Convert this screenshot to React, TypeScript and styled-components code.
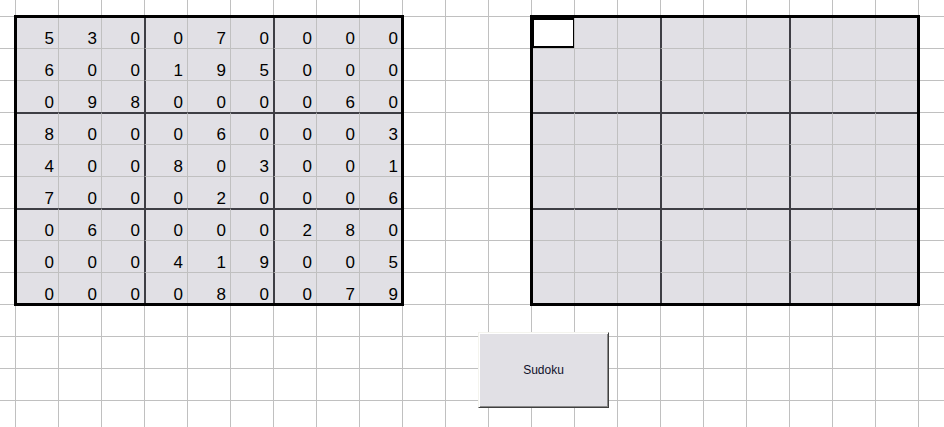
import React from "react";
import styled, { createGlobalStyle } from "styled-components";

const GlobalStyle = createGlobalStyle`
  html, body {
    margin: 0;
    padding: 0;
    background: #ffffff;
    overflow: hidden;
  }
  body {
    font-family: "Liberation Sans", Arial, sans-serif;
  }
`;

const GRID = "#c0c0c0";
const BOX = "#3e3e44";
const FILL = "#e1e0e5";

const Sheet = styled.div`
  position: relative;
  width: 944px;
  height: 427px;
  overflow: hidden;
  display: grid;
  grid-template-columns: 15px repeat(22, 43px);
  grid-template-rows: 16px repeat(13, 32px);
  background-color: #ffffff;
  background-image: linear-gradient(to right, ${GRID} 1px, transparent 1px),
    linear-gradient(to bottom, ${GRID} 1px, transparent 1px);
  background-size: 43px 32px;
  background-position: 15px 16px;
`;

const Board = styled.div<{ $col: number }>`
  position: relative;
  grid-column: ${(p) => p.$col} / span 9;
  grid-row: 2 / span 9;
  display: grid;
  grid-template-columns: repeat(9, 43px);
  grid-template-rows: repeat(9, 32px);

  &::after {
    content: "";
    position: absolute;
    top: -1px;
    left: -1px;
    right: -2px;
    bottom: -2px;
    border: 3px solid #000000;
    pointer-events: none;
  }
`;

const Cell = styled.div<{ $boxLeft: boolean; $boxTop: boolean }>`
  position: relative;
  box-sizing: border-box;
  background: ${FILL};
  border-left: ${(p) => (p.$boxLeft ? `2px solid ${BOX}` : `1px solid ${GRID}`)};
  border-top: ${(p) => (p.$boxTop ? `2px solid ${BOX}` : `1px solid ${GRID}`)};
  display: flex;
  align-items: flex-end;
  justify-content: flex-end;
  padding: 0 4px 1px 0;
  font-size: 17px;
  line-height: 17px;
  color: #000000;
`;

const ActiveCell = styled.div`
  position: absolute;
  left: 0;
  top: 1px;
  width: 43px;
  height: 30px;
  box-sizing: border-box;
  border: 2px solid #000000;
  background: #ffffff;
`;

const Button = styled.button`
  position: absolute;
  left: 478px;
  top: 332px;
  width: 131px;
  height: 76px;
  box-sizing: border-box;
  margin: 0;
  padding: 0;
  background: ${FILL};
  border-style: solid;
  border-width: 1px;
  border-color: #f4f4ee #404040 #404040 #f4f4ee;
  box-shadow: inset 1px 1px 0 #ffffff, inset -1px -1px 0 #8a8a8a;
  font-family: "Liberation Sans", Arial, sans-serif;
  font-size: 12px;
  color: #10102a;
  cursor: default;
`;

const puzzle: number[][] = [
  [5, 3, 0, 0, 7, 0, 0, 0, 0],
  [6, 0, 0, 1, 9, 5, 0, 0, 0],
  [0, 9, 8, 0, 0, 0, 0, 6, 0],
  [8, 0, 0, 0, 6, 0, 0, 0, 3],
  [4, 0, 0, 8, 0, 3, 0, 0, 1],
  [7, 0, 0, 0, 2, 0, 0, 0, 6],
  [0, 6, 0, 0, 0, 0, 2, 8, 0],
  [0, 0, 0, 4, 1, 9, 0, 0, 5],
  [0, 0, 0, 0, 8, 0, 0, 7, 9],
];

function SudokuBoard({ col, values, active }: { col: number; values?: number[][]; active?: boolean }) {
  const cells: React.ReactNode[] = [];
  for (let r = 0; r < 9; r++) {
    for (let c = 0; c < 9; c++) {
      const isActive = active && r === 0 && c === 0;
      cells.push(
        <Cell key={`${r}-${c}`} $boxLeft={c === 3 || c === 6} $boxTop={r === 3 || r === 6}>
          {isActive ? <ActiveCell /> : values ? values[r][c] : null}
        </Cell>
      );
    }
  }
  return <Board $col={col}>{cells}</Board>;
}

export default function App() {
  return (
    <>
      <GlobalStyle />
      <Sheet>
        <SudokuBoard col={2} values={puzzle} />
        <SudokuBoard col={14} active />
        <Button type="button">Sudoku</Button>
      </Sheet>
    </>
  );
}
